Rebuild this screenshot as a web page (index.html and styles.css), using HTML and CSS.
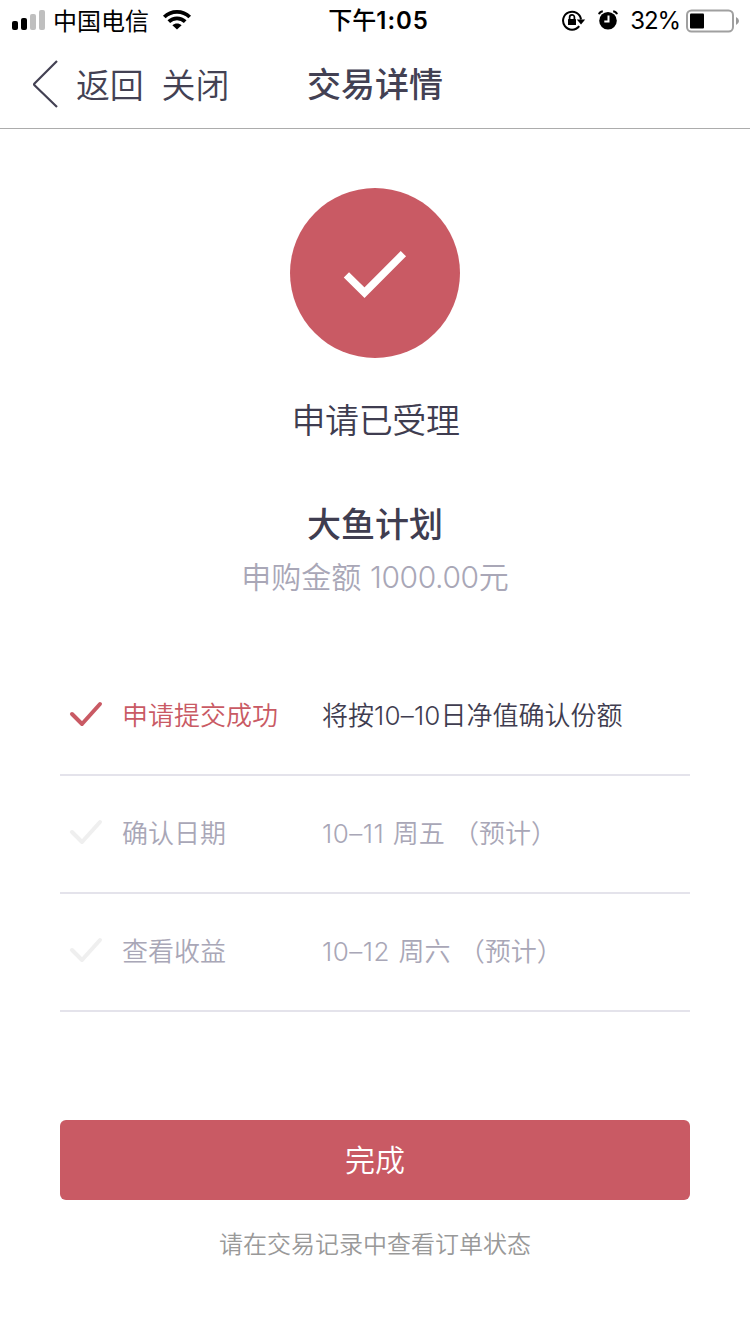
FILE: index.html
```html
<!DOCTYPE html>
<html lang="zh-CN">
<head>
<meta charset="utf-8">
<title>交易详情</title>
<link rel="stylesheet" href="styles.css">
</head>
<body>
<div class="status-bar">
  <div class="status-left">
    <svg class="signal" width="34" height="22" viewBox="0 0 34 22">
      <rect x="0" y="12" width="6" height="9" rx="2"/>
      <rect x="9" y="9" width="6" height="12" rx="2"/>
      <rect class="signal-off" x="18" y="5" width="6" height="16" rx="2"/>
      <rect class="signal-off" x="27" y="1" width="6" height="20" rx="2"/>
    </svg>
    <span class="carrier">中国电信</span>
    <svg class="wifi" width="30" height="22" viewBox="0 0 30 22">
      <path class="wifi-arc" d="M2.300 8C9.200 1.200 20.800 1.200 27.700 8"/>
      <path class="wifi-arc" d="M6.800 12.700C11.400 8.300 18.600 8.300 23.200 12.700"/>
      <path d="M15 20.500l-4.600-4.300c2.600-2.400 6.600-2.400 9.200 0z"/>
    </svg>
  </div>
  <div class="clock">下午<span class="clock-digits">1:05</span></div>
  <div class="status-right">
    <svg class="rotation" width="24" height="22" viewBox="0 0 24 22">
      <path class="ring" d="M17.200 16.200A9 9 0 1 1 19 9.500"/>
      <path d="M14.800 9.400h8.400L19 14.400z"/>
      <rect x="6" y="9" width="8" height="6" rx=".6"/>
      <path class="shackle" d="M7.600 9.500V7.200a2.400 2.400 0 0 1 4.800 0V9.500"/>
    </svg>
    <svg class="alarm" width="20" height="20" viewBox="0 0 20 20">
      <circle cx="10" cy="10.700" r="8.800"/>
      <path class="bell" d="M1 4.300Q1.700 1.800 4.800 1.300M19 4.300Q18.300 1.800 15.200 1.300"/>
      <path class="hands" d="M10.500 5.500v6H6.300"/>
    </svg>
    <span class="percent">32%</span>
    <svg class="battery" width="54" height="24" viewBox="0 0 54 24">
      <rect class="battery-case" x="1" y="1.500" width="46" height="21" rx="4.500"/>
      <rect x="4" y="4.500" width="14" height="15" rx="1"/>
      <path class="battery-tip" d="M50 8q3 1.500 3 4t-3 4z"/>
    </svg>
  </div>
</div>

<header class="nav">
  <svg class="back-arrow" width="28" height="50" viewBox="0 0 28 50">
    <path d="M26 2L3.500 24.500q-.9.900 0 1.800L26 48"/>
  </svg>
  <span class="nav-link">返回</span>
  <span class="nav-link nav-close">关闭</span>
  <h1 class="nav-title">交易详情</h1>
</header>

<main class="content">
  <div class="result-badge">
    <svg width="64" height="50" viewBox="0 0 64 50">
      <path d="M3.400 23.800L21.500 41.700L60.400 2.700"/>
    </svg>
  </div>
  <p class="result-text">申请已受理</p>
  <h2 class="plan-name">大鱼计划</h2>
  <p class="amount">申购金额 <span class="amount-number">1000.00</span>元</p>

  <ul class="steps">
    <li class="step step-done">
      <svg class="step-check" width="34" height="26" viewBox="0 0 34 26"><path d="M3 13L13 23L31 3"/></svg>
      <span class="step-name">申请提交成功</span>
      <span class="step-detail">将按<span class="digits">10–10</span>日净值确认份额</span>
    </li>
    <li class="step">
      <svg class="step-check" width="34" height="26" viewBox="0 0 34 26"><path d="M3 13L13 23L31 3"/></svg>
      <span class="step-name">确认日期</span>
      <span class="step-detail"><span class="digits">10–11</span> 周五 （预计）</span>
    </li>
    <li class="step">
      <svg class="step-check" width="34" height="26" viewBox="0 0 34 26"><path d="M3 13L13 23L31 3"/></svg>
      <span class="step-name">查看收益</span>
      <span class="step-detail"><span class="digits">10–12</span> 周六 （预计）</span>
    </li>
  </ul>

  <button class="done-button" type="button">完成</button>
  <p class="note">请在交易记录中查看订单状态</p>
</main>
</body>
</html>
```
FILE: styles.css
```css
* { box-sizing: border-box; }
body {
  margin: 0;
  width: 750px;
  min-height: 1334px;
  background: #fff;
  color: #3f3d50;
  font-family: "Noto Sans CJK SC DemiLight", "Noto Sans CJK SC", sans-serif;
  font-weight: 350;
}
h1, h2, p, ul { margin: 0; padding: 0; }
svg { display: block; flex: none; }

.status-bar {
  display: grid;
  grid-template-columns: 1fr auto 1fr;
  align-items: center;
  height: 40px;
  padding: 0 10px 0 12px;
  color: #000;
  font-family: "Noto Sans CJK SC", sans-serif;
  font-size: 24px;
  line-height: 40px;
  white-space: nowrap;
}
.status-left, .status-right { display: flex; align-items: center; }
.status-right { justify-content: flex-end; }
.signal, .wifi { margin-top: -1px; }
.signal-off { fill: #bfbfbf; }
.carrier { margin: -2px 0 0 7px; font-weight: 400; }
.wifi { margin-left: 13px; }
.wifi-arc { fill: none; stroke: #000; stroke-width: 3.8; }
.clock { margin: -1px 0 0 5px; font-weight: 500; }
.clock-digits { font-family: Inter, sans-serif; font-weight: 600; letter-spacing: .9px; }
.rotation { margin-right: -1px; }
.ring { fill: none; stroke: #000; stroke-width: 2; }
.shackle { fill: none; stroke: #000; stroke-width: 1.7; }
.alarm { margin: -1px 0 0 13px; }
.bell { fill: none; stroke: #000; stroke-width: 2; }
.hands { fill: none; stroke: #fff; stroke-width: 2; }
.percent { margin: 0 6px 0 12px; font-family: Inter, sans-serif; font-weight: 400; letter-spacing: -1.100px; }
.battery-case { fill: none; stroke: #a0a0a0; stroke-width: 2; }
.battery-tip { fill: #999; }

.nav {
  position: relative;
  display: flex;
  align-items: center;
  height: 89px;
  padding-left: 31px;
  border-bottom: 1px solid #acacac;
  color: #434153;
  font-size: 34px;
  line-height: 86px;
}
.back-arrow path { fill: none; stroke: #434153; stroke-width: 2.200; }
.nav-link { margin-left: 17px; letter-spacing: -.2px; }
.nav-close { margin-left: 18px; }
.nav-title {
  position: absolute;
  top: 0;
  left: 0;
  right: 0;
  text-align: center;
  font-family: "Noto Sans CJK SC", sans-serif;
  font-size: 34px;
  font-weight: 500;
  pointer-events: none;
}

.content {
  display: flex;
  flex-direction: column;
  align-items: center;
  padding: 59px 60px 0;
}
.result-badge {
  display: flex;
  align-items: center;
  justify-content: center;
  width: 170px;
  height: 170px;
  padding-top: 5px;
  border-radius: 50%;
  background: #c95a64;
}
.result-badge path { fill: none; stroke: #fff; stroke-width: 7.500; }
.result-text { margin-top: 36px; padding-left: 1px; font-size: 34px; line-height: 50px; letter-spacing: -.4px; }
.plan-name {
  margin-top: 54px;
  font-family: "Noto Sans CJK SC", sans-serif;
  font-size: 34px;
  line-height: 50px;
  font-weight: 500;
}
.amount { margin-top: 5px; color: #a9a7b7; font-size: 30px; line-height: 44px; white-space: nowrap; word-spacing: 2px; }
.amount-number, .digits { font-family: Inter, sans-serif; font-weight: 350; }
.amount-number { letter-spacing: -.4px; }
.digits { letter-spacing: .5px; }

.steps { width: 630px; margin-top: 59px; list-style: none; }
.step {
  display: grid;
  grid-template-columns: 62px 200px 1fr;
  align-items: center;
  height: 118px;
  padding-bottom: 4px;
  border-bottom: 2px solid #e4e3eb;
  color: #a9a7b7;
  font-size: 26px;
  line-height: 40px;
  white-space: nowrap;
}
.step-check { margin-left: 9px; }
.step-check path { fill: none; stroke: #efefef; stroke-width: 4; stroke-linecap: round; stroke-linejoin: round; }
.step-detail { margin-top: 2px; word-spacing: 2.600px; }
.step-done .step-check path { stroke: #c95a64; }
.step-done .step-name { color: #c95a64; }
.step-done .step-detail { color: #3f3d50; }
.step-done .digits { letter-spacing: .2px; }

.done-button {
  width: 630px;
  height: 80px;
  margin-top: 108px;
  padding: 0 0 5px;
  border: 0;
  border-radius: 6px;
  background: #c95a64;
  color: #fff;
  font: inherit;
  font-size: 30px;
  line-height: 44px;
}
.note { margin-top: 23px; color: #999; font-size: 24px; line-height: 40px; }
```
